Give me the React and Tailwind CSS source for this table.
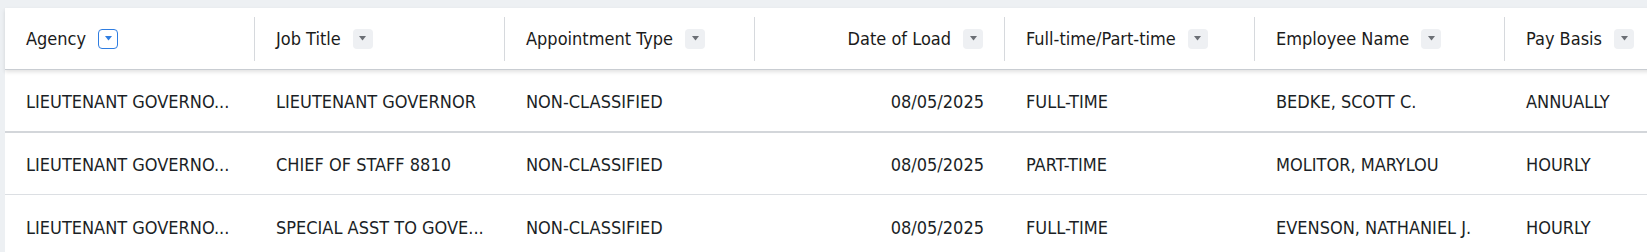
const columns = [
  { key: "agency", label: "Agency", active: true },
  { key: "title", label: "Job Title" },
  { key: "appt", label: "Appointment Type" },
  { key: "date", label: "Date of Load", right: true },
  { key: "ft", label: "Full-time/Part-time" },
  { key: "name", label: "Employee Name" },
  { key: "pay", label: "Pay Basis" },
];

// Textos tal como se ven recortados en la tabla
const rows = [
  {
    agency: "LIEUTENANT GOVERNO...",
    title: "LIEUTENANT GOVERNOR",
    appt: "NON-CLASSIFIED",
    date: "08/05/2025",
    ft: "FULL-TIME",
    name: "BEDKE, SCOTT C.",
    pay: "ANNUALLY",
  },
  {
    agency: "LIEUTENANT GOVERNO...",
    title: "CHIEF OF STAFF 8810",
    appt: "NON-CLASSIFIED",
    date: "08/05/2025",
    ft: "PART-TIME",
    name: "MOLITOR, MARYLOU",
    pay: "HOURLY",
  },
  {
    agency: "LIEUTENANT GOVERNO...",
    title: "SPECIAL ASST TO GOVE...",
    appt: "NON-CLASSIFIED",
    date: "08/05/2025",
    ft: "FULL-TIME",
    name: "EVENSON, NATHANIEL J.",
    pay: "HOURLY",
  },
];

// Botón de filtro de cada columna
const FilterButton = ({ active }) => (
  <span
    className={
      active
        ? "flex h-5 w-5 shrink-0 items-center justify-center rounded-[4px] border border-[#2f7de1] bg-white"
        : "flex h-5 w-5 shrink-0 items-center justify-center rounded-[4px] bg-[#eef0f3]"
    }
  >
    <svg width="7" height="5" viewBox="0 0 7 5">
      <path d="M0 0h7L3.5 4.5z" fill={active ? "#2f7de1" : "#6b6f75"} />
    </svg>
  </span>
);

const App = () => {
  return (
    <div
      className="h-[252px] w-[1647px] overflow-hidden bg-[#edf0f3] pl-[5px] pt-2"
      style={{ fontFamily: '"Liberation Sans Narrow", "DejaVu Sans Condensed", "Roboto Condensed", "Liberation Sans", sans-serif' }}
    >
      <div className="w-[1760px] bg-white">
        {/* Encabezado */}
        <div className="relative z-10 flex h-[62px] border-b border-[#c9cdd2] bg-white shadow-[0_2px_4px_rgba(0,0,0,0.12)]">
          {columns.map((col, i) => (
            <div key={col.key} className="flex w-[250px] shrink-0 items-center">
              <div
                className={`flex flex-1 items-center gap-3 px-[21px] ${
                  col.right ? "justify-end" : ""
                }`}
              >
                <span className="whitespace-nowrap text-[18px] font-medium text-[#1b1b1b]">
                  {col.label}
                </span>
                <FilterButton active={col.active} />
              </div>
              {i < columns.length - 1 && (
                <div className="h-[44px] w-px bg-[#d6d9dd]" />
              )}
            </div>
          ))}
        </div>

        {/* Filas */}
        {rows.map((row, r) => (
          <div
            key={r}
            className={`flex h-[62.5px] items-center pt-[3px] ${
              r === 0 ? "border-b-2 border-[#d3d6da]" : "border-b border-[#dcdfe3]"
            }`}
          >
            {columns.map((col) => (
              <div
                key={col.key}
                className={`w-[250px] shrink-0 whitespace-nowrap px-[21px] text-[18px] text-[#1b1f26] ${
                  col.right ? "text-right" : ""
                }`}
              >
                {row[col.key]}
              </div>
            ))}
          </div>
        ))}
      </div>
    </div>
  );
};

export default App;
